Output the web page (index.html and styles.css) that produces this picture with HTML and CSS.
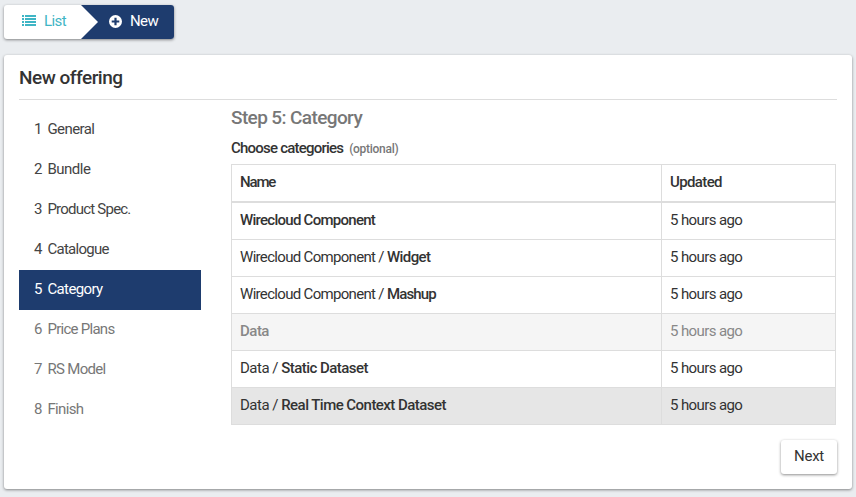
FILE: index.html
```html
<!DOCTYPE html>
<html lang="en">
<head>
<meta charset="utf-8">
<title>New offering</title>
<link rel="stylesheet" href="styles.css">
</head>
<body>
<nav class="crumbs">
  <a class="crumb crumb-list">
    <svg class="icon-list" viewBox="0 0 14 11" width="14" height="11"><path d="M0 0h2v2H0zM3 0h11v2H3zM0 3h2v2H0zM3 3h11v2H3zM0 6h2v2H0zM3 6h11v2H3zM0 9h2v2H0zM3 9h11v2H3z"/></svg>
    <span class="t58">List</span>
  </a>
  <a class="crumb crumb-new">
    <svg class="icon-plus" viewBox="0 0 12 12" width="13" height="13"><path fill-rule="evenodd" d="M6 0a6 6 0 1 0 0 12A6 6 0 0 0 6 0zM5 2.500h2V5h2.500v2H7v2.500H5V7H2.500V5H5z"/></svg>
    <span class="t58">New</span>
  </a>
</nav>
<main class="panel">
  <h1 class="title">New offering</h1>
  <div class="content">
    <ul class="steps">
      <li><span>1</span><span class="t58">General</span></li>
      <li><span>2</span><span class="t50">Bundle</span></li>
      <li><span>3</span><span class="t78">Product Spec.</span></li>
      <li><span>4</span><span class="t74">Catalogue</span></li>
      <li class="active"><span>5</span><span class="t62">Category</span></li>
      <li class="disabled"><span>6</span><span class="t74">Price Plans</span></li>
      <li class="disabled"><span>7</span><span class="t70">RS Model</span></li>
      <li class="disabled"><span>8</span><span class="t66">Finish</span></li>
    </ul>
    <section class="form">
      <h2 class="step-title">Step 5: Category</h2>
      <div class="label"><b class="t78">Choose categories</b><small>(optional)</small></div>
      <table>
        <thead><tr><th class="name"><span class="t120">Name</span></th><th><span class="t62">Updated</span></th></tr></thead>
        <tbody>
          <tr class="first"><td><b class="t74">Wirecloud Component</b></td><td>5 hours ago</td></tr>
          <tr><td><span class="t70">Wirecloud Component / </span><b class="t58">Widget</b></td><td>5 hours ago</td></tr>
          <tr><td><span class="t70">Wirecloud Component / </span><b class="t84">Mashup</b></td><td>5 hours ago</td></tr>
          <tr class="muted"><td><b class="t50">Data</b></td><td>5 hours ago</td></tr>
          <tr><td><span class="t50">Data / </span><b class="t54">Static Dataset</b></td><td>5 hours ago</td></tr>
          <tr class="selected"><td><span class="t50">Data / </span><b class="t54">Real Time Context Dataset</b></td><td>5 hours ago</td></tr>
        </tbody>
      </table>
      <button class="next">Next</button>
    </section>
  </div>
</main>
</body>
</html>
```
FILE: styles.css
```css
* { box-sizing: border-box; }
body {
  margin: 0;
  padding: 5px 4px 8px;
  background: #eaedf0;
  color: #333;
  font: 15px/20px Roboto, "Liberation Sans", sans-serif;
}
b, th { font-weight: 500; }
svg { display: block; fill: currentColor; }

.t50 { letter-spacing: -.5px; }
.t54 { letter-spacing: -.54px; }
.t58 { letter-spacing: -.58px; }
.t62 { letter-spacing: -.62px; }
.t66 { letter-spacing: -.66px; }
.t70 { letter-spacing: -.68px; }
.t74 { letter-spacing: -.73px; }
.t78 { letter-spacing: -.78px; }
.t84 { letter-spacing: -.84px; }
.t120 { letter-spacing: -1.15px; }

.crumbs {
  display: flex;
  width: 170px;
  height: 34px;
  border-radius: 3px;
  box-shadow: 0 1px 3px rgba(0, 0, 0, .45);
  overflow: hidden;
  background: #fff;
}
.crumb { display: flex; align-items: center; padding-bottom: 2px; }
.crumb-list { width: 77px; padding-left: 18px; gap: 8px; color: #3fb5c5; }
.icon-list { margin-bottom: 1px; }
.crumb-new {
  flex: 1;
  padding-left: 28px;
  gap: 8px;
  background: #1e3c6e;
  color: #fff;
  clip-path: polygon(0 0, 100% 0, 100% 100%, 0 100%, 17px 50%);
}

.panel {
  height: 434px;
  margin-top: 16px;
  padding: 0 15px;
  border-radius: 3px;
  background: #fff;
  box-shadow: 0 1px 3px rgba(0, 0, 0, .45);
}
.title {
  height: 45px;
  margin: 0;
  padding-top: 12px;
  border-bottom: 1px solid #ddd;
  font-size: 19px;
  line-height: 22px;
  font-weight: 500;
  letter-spacing: -.5px;
}
.content { display: flex; gap: 30px; }
.steps { width: 182px; margin: 10px 0 0; padding: 0; list-style: none; }
.steps li { display: flex; gap: 5px; height: 40px; padding: 9px 15px; color: #444; }
.steps .active { background: #1e3c6e; color: #fff; }
.steps .disabled { color: #777; }

.form { width: 606px; padding-top: 7px; display: flex; flex-direction: column; }
.step-title {
  margin: 0;
  font-size: 19px;
  line-height: 22px;
  font-weight: 500;
  letter-spacing: -.61px;
  color: #777;
}
.label { display: flex; align-items: baseline; gap: 6px; height: 20px; margin: 9px 0 6px; }
.label small { font-size: 12px; font-weight: 500; letter-spacing: -.28px; color: #777; }

table { width: 605px; border-collapse: collapse; table-layout: fixed; }
th, td { height: 37px; padding: 0 8px; border: 1px solid #ddd; text-align: left; white-space: pre; }
th { padding-bottom: 2px; border-bottom-width: 2px; }
td { padding-bottom: 2px; letter-spacing: -.6px; }
.first td { height: 38px; padding-bottom: 1px; }
.name { width: 430px; }
.muted { background: #f5f5f5; color: #888; }
.selected { background: #e6e6e6; }

.next {
  align-self: flex-end;
  width: 56px;
  height: 34px;
  margin-top: 15px;
  padding: 0 0 2px;
  border: 0;
  border-radius: 3px;
  background: #fff;
  color: #333;
  font: inherit;
  letter-spacing: -.25px;
  box-shadow: 0 1px 3px rgba(0, 0, 0, .45);
}
```
